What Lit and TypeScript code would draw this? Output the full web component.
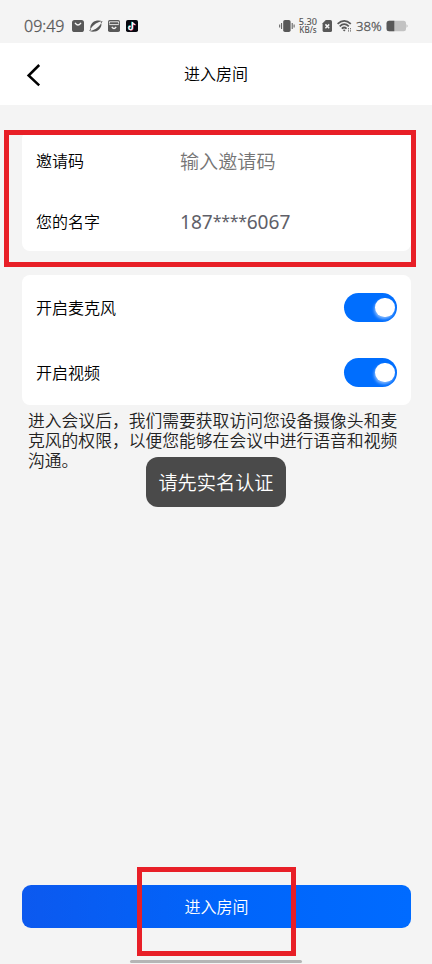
import { LitElement, html, css } from "lit";
import { customElement } from "lit/decorators.js";

@customElement("status-bar")
class StatusBar extends LitElement {
  static styles = css`
    :host { display: flex; height: 43px; box-sizing: border-box; padding: 10px 24px 0; justify-content: space-between; align-items: center; color: #585858; font-family: "Noto Sans", sans-serif; }
    .side { display: flex; align-items: center; height: 32px; }
    .time { font-size: 16px; line-height: 30px; width: 41px; margin-top: -2px; white-space: nowrap; -webkit-text-stroke: .3px #585858; }
    .icons { margin: -2px 0 0 6px; display: block; }
    .speed { font-size: 9.2px; line-height: 8px; font-weight: 500; width: 20px; text-align: center; margin: -2px 0 0 3px; white-space: nowrap; }
    .speed div + div { font-size: 8px; }
    .pct { font-size: 13.2px; line-height: 30px; width: 27px; margin-left: 4px; margin-top: -1px; -webkit-text-stroke: .3px #585858; }
    svg { display: block; flex: none; margin-top: -2px; }
    .sim { margin-left: 4px; }
    .wifi { margin-left: 4px; }
    .bat { margin-left: 3px; }
  `;
  render() {
    return html`
      <div class="side">
        <span class="time">09:49</span>
        <svg class="icons" width="70" height="14" viewBox="0 0 70 14">
          <rect x="1" y="1" width="12" height="12" rx="2.6" fill="#585858" />
          <path d="M4.4 4.4Q7 7.8 9.6 4.4" fill="none" stroke="#f4f4f4" stroke-width="1.5" stroke-linecap="round" />
          <path d="M19.6 10.2C18.4 6.6 21.6 2.2 26 1.6C28 1.3 29.8 1.5 31 2.2C27.5 2.4 22 5.5 19.6 10.2Z" fill="#585858" />
          <path d="M30.2 3.9C31.4 7.4 28.2 11.8 23.8 12.5C21.8 12.8 20 12.6 18.8 11.9C22.4 11.7 27.8 8.6 30.2 3.9Z" fill="#585858" />
          <path d="M19.6 10.2L18.8 11.9M31 2.2L30.2 3.9" stroke="#585858" stroke-width="1" />
          <rect x="37" y="1" width="12" height="12" rx="1.8" fill="#585858" />
          <path d="M38.4 4.6V2.8H47.6V4.6M38.2 5.6H47.8" stroke="#f4f4f4" stroke-width=".9" fill="none" />
          <path d="M40.8 7.8Q43 11.2 45.2 7.8" stroke="#f4f4f4" stroke-width="1.3" fill="none" />
          <rect x="55" y="1" width="12" height="12" rx="1.8" fill="#080810" />
          <path d="M61.4 3V8.9A1.8 1.8 0 1 1 59.6 7.1M61.4 3.2Q62 5.4 64.2 5.5" fill="none" stroke="#25d8dc" stroke-width="1.3" transform="translate(-.5 -.2)" />
          <path d="M61.4 3V8.9A1.8 1.8 0 1 1 59.6 7.1M61.4 3.2Q62 5.4 64.2 5.5" fill="none" stroke="#ef5475" stroke-width="1.3" transform="translate(.5 .4)" />
          <path d="M61.4 3V8.9A1.8 1.8 0 1 1 59.6 7.1M61.4 3.2Q62 5.4 64.2 5.5" fill="none" stroke="#fff" stroke-width="1.1" />
        </svg>
      </div>
      <div class="side">
        <svg width="16" height="14" viewBox="0 0 16 14">
          <rect x="4.2" y="1" width="7.4" height="12" rx="1.8" fill="#585858" />
          <path d="M2.6 4V10M13.2 4V10M.7 5.5V8.5M15.1 5.5V8.5" stroke="#585858" stroke-width="1" />
        </svg>
        <div class="speed"><div>5.30</div><div>KB/s</div></div>
        <svg class="sim" width="11" height="14" viewBox="0 0 11 14">
          <path d="M3.8 1H8.4Q10 1 10 2.6V11.4Q10 13 8.4 13H2.2Q.6 13 .6 11.4V4.2Z" fill="#585858" />
          <path d="M3.4 5.4L7.2 9.2M7.2 5.4L3.4 9.2" stroke="#f4f4f4" stroke-width="1.5" />
        </svg>
        <svg class="wifi" width="15" height="14" viewBox="0 0 15 14">
          <g fill="none" stroke="#585858" stroke-width="1.7">
            <path d="M.6 4.8Q7.2-1.2 13.8 4.8" /><path d="M2.7 7.3Q7.2 3 11.8 7.3" /><path d="M4.8 9.6Q7.2 7.4 9.6 9.6" />
          </g>
          <path d="M5.8 11L7.2 12.6L8.6 11Q7.2 10 5.8 11Z" fill="#585858" />
          <path d="M11.5 9V12.8M13.5 9V12.8" stroke="#777" stroke-width="1" stroke-dasharray="1.4 .8" />
        </svg>
        <span class="pct">38%</span>
        <svg class="bat" width="22" height="12" viewBox="0 0 22 12">
          <path d="M3 .7H17.5Q20 .7 20 3.2V8.8Q20 11.3 17.5 11.3H3Z" fill="#c2c2c2" />
          <path d="M20.4 4.2L21.6 5.2V6.8L20.4 7.8Z" fill="#c2c2c2" />
          <path d="M8.3 .7H3Q.5 .7 .5 3.2V8.8Q.5 11.3 3 11.3H8.3Z" fill="#585858" />
        </svg>
      </div>`;
  }
}

@customElement("toggle-switch")
class ToggleSwitch extends LitElement {
  static styles = css`
    :host { display: flex; align-items: center; justify-content: flex-end; width: 53px; height: 29px; border-radius: 15px; background: #006efe; box-sizing: border-box; padding-right: 2.5px; overflow: hidden; }
    .knob { width: 19.5px; height: 19.5px; border-radius: 50%; background: #fff; box-shadow: -1px 2px 3px rgba(255,255,255,.5); }
  `;
  render() { return html`<div class="knob"></div>`; }
}

@customElement("app-root")
class AppRoot extends LitElement {
  static styles = css`
    :host { display: flex; flex-direction: column; position: relative; height: 964px; overflow: hidden; background: #f4f4f4; color: #000; font-family: "Noto Sans CJK SC", sans-serif; font-size: 16px; font-weight: 350; }
    header { height: 62px; background: #fff; display: grid; grid-template-columns: 60px 1fr 60px; align-items: center; text-align: center; }
    header svg { display: block; margin: 2px 0 0 25px; }
    .title { line-height: 24px; padding-bottom: 2px; }
    main { flex: 1; padding: 26px 21px 0 22px; }
    .card { background: #fff; border-radius: 8px; padding: 0 14px; box-sizing: border-box; }
    .form { height: 120px; }
    .row { display: flex; align-items: center; height: 61px; }
    .form .row:first-child { height: 60px; }
    .label { line-height: 24px; padding-bottom: 2px; }
    .form .label { width: 144px; }
    .value { font-size: 19.1px; line-height: 28px; color: #757575; padding-bottom: 1px; }
    .num { font-family: "Noto Sans", sans-serif; color: #606068; font-weight: 400; padding-bottom: 0; }
    .stars { font-size: 16px; letter-spacing: -.35px; line-height: 20px; position: relative; top: -2px; }
    .options { height: 130px; margin-top: 24px; }
    .options .row { height: 65px; justify-content: space-between; }
    .tip { margin: 5px 0 0 6px; width: 372px; font-size: 16.8px; line-height: 20px; color: #222; }
    .tip div { white-space: nowrap; }
    footer { padding: 0 21px 0 22px; height: 79px; display: flex; flex-direction: column; box-sizing: border-box; }
    .enter { width: 100%; height: 43px; border: 0; border-radius: 9px; color: #fff; font: inherit; padding: 0 0 2px; background: linear-gradient(90deg, #0c59ef, #0065fb 55%, #006bff); }
    .home { width: 172px; height: 3px; border-radius: 2px; background: #b5b5b5; margin: 32px 0 0 108px; }
    .toast { position: absolute; left: 146px; top: 457px; width: 140px; height: 50px; border-radius: 12px; background: #4a4a4a; color: #fff; display: flex; align-items: center; justify-content: center; font-size: 19.2px; }
    .mark { position: absolute; box-sizing: border-box; border: 5px solid #e81f27; }
    .mark-form { left: 4px; top: 130px; width: 412px; height: 137px; }
    .mark-button { left: 137px; top: 867px; width: 159px; height: 89px; }
  `;
  render() {
    return html`
      <status-bar></status-bar>
      <header>
        <svg width="18" height="24" viewBox="0 0 18 24"><path d="M14.2 2L3.6 12.5L14.2 22.4" fill="none" stroke="#000" stroke-width="2.5" /></svg>
        <span class="title">进入房间</span>
      </header>
      <main>
        <section class="card form">
          <div class="row"><span class="label">邀请码</span><span class="value">输入邀请码</span></div>
          <div class="row"><span class="label">您的名字</span><span class="value num">187<span class="stars">****</span>6067</span></div>
        </section>
        <section class="card options">
          <div class="row"><span class="label">开启麦克风</span><toggle-switch></toggle-switch></div>
          <div class="row"><span class="label">开启视频</span><toggle-switch></toggle-switch></div>
        </section>
        <div class="tip">
          <div>进入会议后，我们需要获取访问您设备摄像头和麦</div>
          <div>克风的权限，以便您能够在会议中进行语音和视频</div>
          <div>沟通。</div>
        </div>
      </main>
      <footer><button class="enter">进入房间</button><div class="home"></div></footer>
      <div class="toast">请先实名认证</div>
      <div class="mark mark-form"></div>
      <div class="mark mark-button"></div>`;
  }
}
